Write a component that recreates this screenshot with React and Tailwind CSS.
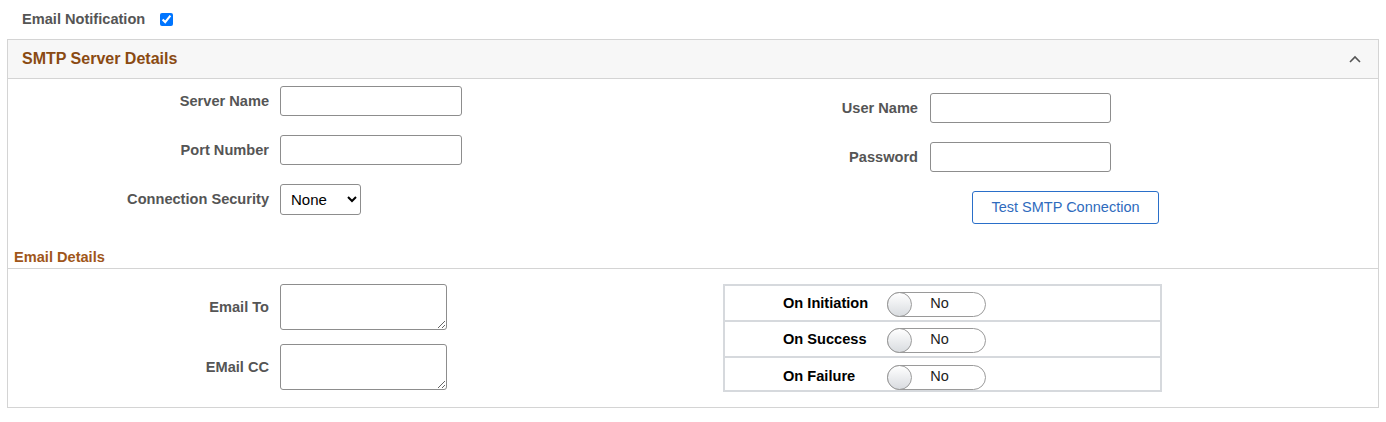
import React from 'react';

function Field({ label, children }) {
  return (
    <div className="flex items-center">
      <label className="w-[272px] pr-[11px] pt-px text-right text-[14.6px] font-bold text-[#555]">{label}</label>
      {children}
    </div>
  );
}

function Toggle() {
  return (
    <div className="relative flex h-[25px] w-[99px] items-center rounded-full border border-[#9a9a9a] bg-white">
      <span className="absolute -left-px -top-px h-[25px] w-[25px] rounded-full border border-[#9a9a9a] bg-gradient-to-b from-white to-[#d9dce0]" />
      <span className="ml-[6px] flex-1 text-center text-[14.5px] text-[#222]">No</span>
    </div>
  );
}

function NotifyRow({ label, last }) {
  return (
    <div className={`flex h-[36px] items-center pt-[2px] ${last ? '' : 'border-b-2 border-[#d6d9dd]'}`}>
      <span className="w-[162px] pl-[58px] text-[14.6px] font-bold text-black">{label}</span>
      <Toggle />
    </div>
  );
}

export default function App() {
  const inputCls = 'h-[30px] w-[182px] rounded-[3px] border border-[#8d8d8d] bg-white px-2 text-[14px]';
  const rInputCls = 'h-[30px] w-[181px] rounded-[3px] border border-[#8d8d8d] bg-white px-2 text-[14px]';
  const areaCls = 'h-[46px] w-[167px] rounded-[3px] border border-[#8d8d8d] bg-white px-2 text-[14px]';

  return (
    <div className="h-[422px] w-[1386px] bg-white font-['Liberation_Sans',Arial,sans-serif]">
      <div className="flex h-[39px] items-center pl-[22px]">
        <span className="text-[14.6px] font-bold text-[#555]">Email Notification</span>
        <input type="checkbox" defaultChecked className="ml-[15px] h-[13px] w-[13px]" />
      </div>

      <div className="mx-[7px] border border-[#d4d4d4]">
        <div className="flex h-[39px] items-center justify-between border-b border-[#d4d4d4] bg-[#f7f7f7] pl-[14px] pr-[17px]">
          <span className="text-[16px] font-bold text-[#8a4a12]">SMTP Server Details</span>
          <svg width="12" height="8" viewBox="0 0 12 8" fill="none" stroke="#555" strokeWidth="1.6">
            <path d="M1 7 L6 2 L11 7" />
          </svg>
        </div>

        <div className="flex h-[168px]">
          <div className="flex w-[686px] flex-col gap-[19px] pt-[7px]">
            <Field label="Server Name"><input className={inputCls} /></Field>
            <Field label="Port Number"><input className={inputCls} /></Field>
            <Field label="Connection Security">
              <select className="h-[31px] w-[81px] rounded-[3px] border border-[#8d8d8d] bg-white pl-[6px] text-[15px] text-black">
                <option>None</option>
              </select>
            </Field>
          </div>
          <div className="flex flex-col pt-[14px]">
            <div className="flex items-center">
              <label className="w-[236px] pr-[12px] pt-px text-right text-[14.6px] font-bold text-[#555]">User Name</label>
              <input className={rInputCls} />
            </div>
            <div className="mt-[19px] flex items-center">
              <label className="w-[236px] pr-[12px] pt-px text-right text-[14.6px] font-bold text-[#555]">Password</label>
              <input className={rInputCls} />
            </div>
            <button className="ml-[278px] mt-[19px] h-[33px] w-[187px] rounded-[3px] border border-[#2a6fc9] bg-white text-[14.5px] text-[#2f6bbd]">
              Test SMTP Connection
            </button>
          </div>
        </div>

        <div className="flex h-[22px] items-center border-b border-[#d4d4d4] pl-[6px]">
          <span className="text-[14.6px] font-bold text-[#a0561a]">Email Details</span>
        </div>

        <div className="flex h-[138px] pt-[15px]">
          <div className="flex w-[715px] flex-col gap-[14px]">
            <Field label="Email To"><textarea className={areaCls} /></Field>
            <Field label="EMail CC"><textarea className={areaCls} /></Field>
          </div>
          <div className="h-[108px] w-[439px] border-2 border-[#d6d9dd]">
            <NotifyRow label="On Initiation" />
            <NotifyRow label="On Success" />
            <NotifyRow label="On Failure" last />
          </div>
        </div>
      </div>
    </div>
  );
}
